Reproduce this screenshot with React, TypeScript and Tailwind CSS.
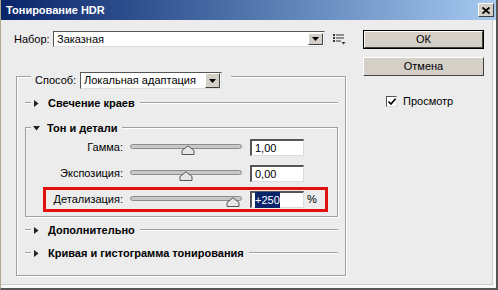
import React from "react";

const etched = "h-[2px] border-t border-t-[#a0a0a0] border-b border-b-white";

const Line = ({ className = "" }: { className?: string }) => (
  <div className={`${etched} ${className}`} />
);

const SectionHeader = ({ title, open = false }: { title: string; open?: boolean }) => (
  <div className="flex items-center h-[14px] w-[313px]">
    <Line className="w-[6px]" />
    {open ? (
      <svg className="ml-[2px]" width="7" height="5" viewBox="0 0 7 5">
        <path d="M0 0 L7 0 L3.5 4.5 Z" fill="#222" />
      </svg>
    ) : (
      <svg className="ml-[3px]" width="5" height="7" viewBox="0 0 5 7">
        <path d="M0 0 L4.5 3.5 L0 7 Z" fill="#222" />
      </svg>
    )}
    <span className={`${open ? "ml-[7px]" : "ml-[9px]"} font-bold text-[11px] leading-none whitespace-nowrap`}>
      {title}
    </span>
    <Line className="ml-[5px] flex-1" />
  </div>
);

const DropButton = ({ small = false }: { small?: boolean }) => (
  <div
    className={`${small ? "w-[15px] h-[12px]" : "w-[15px] h-[15px]"} bg-[#d4d0c8] border border-t-white border-l-white border-r-[#404040] border-b-[#404040] flex items-center justify-center`}
  >
    <svg width="7" height="4" viewBox="0 0 7 4">
      <path d="M0 0 L7 0 L3.5 4 Z" fill="#000" />
    </svg>
  </div>
);

const Slider = ({ pos }: { pos: number }) => (
  <div className="relative w-[112px] h-[19px]">
    <div className="absolute left-0 right-0 top-[6px] h-[5px] rounded-full bg-[#c8c8c8] border border-[#8c8c8c]" />
    <svg className="absolute top-[7px]" style={{ left: pos - 7 }} width="14" height="10" viewBox="0 0 14 10">
      <path d="M1 9.5 L1 5.5 L7 0.8 L13 5.5 L13 9.5 Z" fill="#e6e6e6" stroke="#555" strokeWidth="1" />
    </svg>
  </div>
);

const ValueBox = ({ children }: { children: React.ReactNode }) => (
  <div className="w-[54px] h-[17px] bg-white border-t-2 border-l-2 border-t-[#555] border-l-[#555] border-r border-b border-r-[#dcdcdc] border-b-[#dcdcdc] flex items-center pl-[3px] text-[11px]">
    {children}
  </div>
);

const rows = [
  { label: "Гамма:", value: "1,00", pos: 58 },
  { label: "Экспозиция:", value: "0,00", pos: 56 },
  { label: "Детализация:", value: "+250", pos: 103, hl: true },
];

export default function App() {
  return (
    <div className="w-[498px] h-[290px] bg-[#ececec] flex flex-col border-l border-l-[#b0a888] border-r-2 border-b-2 border-r-[#555] border-b-[#555] font-['Liberation_Sans',Arial,sans-serif] text-black overflow-hidden">
      {/* title bar */}
      <div className="h-[20px] flex items-center justify-between bg-gradient-to-r from-[#0a246a] to-[#a6caf0] pl-[5px] pr-[2px]">
        <span className="text-white font-bold text-[11px]">Тонирование HDR</span>
        <div className="w-[16px] h-[14px] bg-[#d4d0c8] border border-t-white border-l-white border-r-[#404040] border-b-[#404040] flex items-center justify-center">
          <svg width="8" height="7" viewBox="0 0 8 7">
            <path d="M0.5 0.5 L7.5 6.5 M7.5 0.5 L0.5 6.5" stroke="#000" strokeWidth="1.8" />
          </svg>
        </div>
      </div>

      <div className="flex-1 border-r-[3px] border-b-[3px] border-[#f9f9f9]">
        <div className="h-full flex border-r border-b border-[#cdcdcd]">
          {/* left column */}
          <div className="pl-[13px] pt-[11px] w-[345px] flex flex-col">
            <div className="flex items-center h-[16px]">
              <span className="w-[39px] text-[11px]">Набор:</span>
              <div className="w-[272px] h-[16px] bg-white border-t border-l border-t-[#555] border-l-[#555] border-r border-b border-r-[#ddd] border-b-[#ddd] flex items-center justify-between pl-[3px] pr-[1px] text-[11px]">
                <span>Заказная</span>
                <DropButton small />
              </div>
              <svg className="ml-[8px]" width="13" height="12" viewBox="0 0 13 12">
                <rect x="0" y="1" width="2" height="2" fill="#333" />
                <rect x="0" y="4" width="2" height="2" fill="#333" />
                <rect x="0" y="7" width="2" height="2" fill="#333" />
                <rect x="3" y="1.5" width="8" height="1" fill="#333" />
                <rect x="3" y="4.5" width="8" height="1" fill="#333" />
                <rect x="3" y="7.5" width="5" height="1" fill="#333" />
                <path d="M8.5 9 L12.5 9 L10.5 11.5 Z" fill="#333" />
              </svg>
            </div>

            {/* group box */}
            <div className="relative mt-[29px] ml-[2px] w-[330px] h-[200px] border border-[#a0a0a0] shadow-[inset_1px_1px_0_#fff,1px_1px_0_#fff] flex flex-col pl-[8px]">
              <div className="absolute -top-[5px] left-[14px] flex items-center bg-[#ececec] pl-[4px] pr-[9px]">
                <span className="text-[11px] w-[45px]">Способ:</span>
                <div className="w-[142px] h-[17px] bg-white border-t border-l border-t-[#555] border-l-[#555] border-r border-b border-r-[#ddd] border-b-[#ddd] flex items-center justify-between pl-[3px] pr-[1px] text-[11px]">
                  <span>Локальная адаптация</span>
                  <DropButton />
                </div>
              </div>

              <div className="mt-[19px]">
                <SectionHeader title="Свечение краев" />
              </div>

              <div className="mt-[11px] flex flex-col w-[313px]">
                <SectionHeader title="Тон и детали" open />
                <div className="-mt-[7px] pt-[7px] pb-[4px] border-x border-b border-[#a0a0a0] shadow-[1px_1px_0_#fff] flex flex-col gap-[1px]">
                  {rows.map((r) => (
                    <div
                      key={r.label}
                      className={`ml-[17px] w-[285px] h-[25px] border-[3px] ${r.hl ? "border-[#e01010]" : "border-transparent"} flex items-center`}
                    >
                      <span className="w-[78px] text-right text-[11px] pr-[1px]">{r.label}</span>
                      <div className="ml-[6px]">
                        <Slider pos={r.pos} />
                      </div>
                      <div className="ml-[8px]">
                        <ValueBox>
                          {r.hl ? <span className="bg-[#0a246a] text-white">{r.value}</span> : r.value}
                        </ValueBox>
                      </div>
                      {r.hl && <span className="ml-[3px] text-[11px]">%</span>}
                    </div>
                  ))}
                </div>
              </div>

              <div className="mt-[6px]">
                <SectionHeader title="Дополнительно" />
              </div>
              <div className="mt-[9px]">
                <SectionHeader title="Кривая и гистограмма тонирования" />
              </div>
            </div>
          </div>

          {/* right column */}
          <div className="ml-[17px] pt-[10px] flex flex-col">
            <div className="w-[121px] h-[19px] border border-black">
              <div className="h-full bg-[#d4d0c8] border border-t-white border-l-white border-r-[#404040] border-b-[#404040] flex items-center justify-center text-[11px]">
                ОК
              </div>
            </div>
            <div className="mt-[8px] w-[121px] h-[19px] bg-[#d4d0c8] border border-t-white border-l-white border-r-[#404040] border-b-[#404040] flex items-center justify-center text-[11px]">
              Отмена
            </div>
            <div className="mt-[17px] ml-[23px] flex items-center">
              <div className="w-[11px] h-[11px] bg-white border-t border-l border-t-[#555] border-l-[#555] border-r border-b border-r-[#ddd] border-b-[#ddd] flex items-center justify-center">
                <svg width="8" height="7" viewBox="0 0 8 7">
                  <path d="M0.5 3.5 L3 6 L7.5 0.8" stroke="#000" strokeWidth="1.6" fill="none" />
                </svg>
              </div>
              <span className="ml-[6px] text-[11px]">Просмотр</span>
            </div>
          </div>
        </div>
      </div>
    </div>
  );
}
